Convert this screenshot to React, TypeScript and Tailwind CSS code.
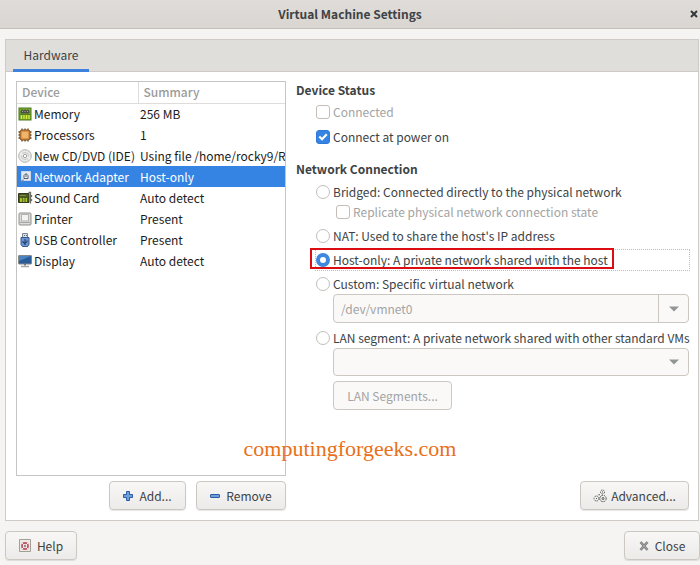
import { useState, type ReactNode } from 'react';

const ICON = 'h-4 w-4 shrink-0';

function MemoryIcon() {
  return (
    <svg viewBox="0 0 16 16" className={ICON}>
      <rect x="2" y="2" width="12" height="12" fill="#7fae2e" stroke="#47761a" />
      <path d="M3.500 7.500V5.500l1-2h1l1 1 1-1h1l1 1 1-1h1l1 2v2z" fill="#4a4f45" />
      <path d="M5 5.500h1M7.500 5.500h1M10 5.500h1" stroke="#a9ada4" />
      <path d="M4.500 9v4M7 9v4M9.500 9v4M12 9v4" stroke="#d9ec3c" strokeWidth="1.200" />
      <path d="M2.500 8.500h11" stroke="#4f7f18" />
    </svg>
  );
}

function ProcessorIcon() {
  return (
    <svg viewBox="0 0 16 16" className={ICON}>
      <path
        d="M5 1.500v13M8 1.500v13M11 1.500v13M1.500 5h13M1.500 8h13M1.500 11h13"
        stroke="#5d4a30"
        strokeWidth="1.300"
      />
      <rect x="3" y="3" width="10" height="10" rx="2" fill="#dc9244" stroke="#7c4c1a" />
      <rect x="5" y="5" width="6" height="6" rx="1" fill="#efb46e" />
    </svg>
  );
}

function DiscIcon() {
  return (
    <svg viewBox="0 0 16 16" className={ICON}>
      <circle cx="8" cy="8" r="6.300" fill="#e9e9e7" stroke="#b3b3b0" />
      <circle cx="8" cy="8" r="3.600" fill="none" stroke="#cbcbc8" />
      <circle cx="8" cy="8" r="1.700" fill="#fff" stroke="#a3a3a0" />
      <path d="M3 5.500l3 1.500M10 9l3 1.500" stroke="#fff" />
    </svg>
  );
}

function NetworkIcon() {
  return (
    <svg viewBox="0 0 16 16" className={ICON}>
      <path d="M4.500 2.500h9v9h-9z" fill="#e3e9f2" stroke="#cbd8ea" />
      <path d="M7 9.500V6.500l2-2 2 2v3z" fill="#f8fafc" stroke="#4c596b" />
      <path d="M9 5v3" stroke="#4c596b" />
      <path d="M3 13l3.500-3v3z" fill="#6f83a3" />
    </svg>
  );
}

function SoundIcon() {
  return (
    <svg viewBox="0 0 16 16" className={ICON}>
      <path d="M1.500 3.500h10.500v9h-10.500z" fill="#4b5b20" stroke="#33391f" />
      <path d="M3 5.500h6" stroke="#7e8b56" />
      <path d="M3 8h7v4H3z" fill="#a9c727" />
      <path d="M5 8l1 2-1 2M8 8v4" fill="none" stroke="#4b5b20" />
      <path d="M11.500 2.500h2v11M14.500 5v2M14.500 9v2" fill="none" stroke="#6b6d68" strokeWidth="1.300" />
    </svg>
  );
}

function PrinterIcon() {
  return (
    <svg viewBox="0 0 16 16" className={ICON}>
      <rect x="2" y="2" width="12" height="12" rx="1" fill="#dcdcda" stroke="#8f8f8c" />
      <rect x="4.500" y="3.500" width="7" height="6.500" fill="#f3f3f1" stroke="#b3b3b0" />
      <path d="M2.500 11.500h11" stroke="#a9a9a6" />
    </svg>
  );
}

function UsbIcon() {
  return (
    <svg viewBox="0 0 16 16" className={ICON}>
      <path d="M5.500 1.500h5v4h-5z" fill="#d9dee6" stroke="#7c8490" />
      <path d="M4 5.500h8v7l-1.500 2h-5L4 12.500z" fill="#6d98cf" stroke="#34578c" />
      <path d="M8 13V7M6 9v1.500l2 1M10 8.500V10l-2 1" fill="none" stroke="#17345f" />
      <path d="M7 3.500h.8M9 3.500h.8" stroke="#4b5563" />
    </svg>
  );
}

function DisplayIcon() {
  return (
    <svg viewBox="0 0 16 16" className={ICON}>
      <rect x="1.500" y="2.500" width="13" height="8.500" rx=".5" fill="#2a5c99" stroke="#85888a" />
      <path d="M2 3h12L2 8z" fill="#4b85c4" />
      <path d="M7 11h2v1.500H7z" fill="#777" />
      <path d="M4 13.500h8" stroke="#a3a5a2" strokeWidth="1.500" />
    </svg>
  );
}

const devices = [
  { name: 'Memory', summary: '256 MB', icon: MemoryIcon },
  { name: 'Processors', summary: '1', icon: ProcessorIcon },
  { name: 'New CD/DVD (IDE)', summary: 'Using file /home/rocky9/R', icon: DiscIcon },
  { name: 'Network Adapter', summary: 'Host-only', icon: NetworkIcon },
  { name: 'Sound Card', summary: 'Auto detect', icon: SoundIcon },
  { name: 'Printer', summary: 'Present', icon: PrinterIcon },
  { name: 'USB Controller', summary: 'Present', icon: UsbIcon },
  { name: 'Display', summary: 'Auto detect', icon: DisplayIcon },
];

function PushButton({ children, className = '' }: { children: ReactNode; className?: string }) {
  return (
    <button
      type="button"
      className={`flex h-[29px] items-center justify-center rounded border border-[#cdc7c2] bg-linear-to-b from-[#f8f7f6] to-[#edebe9] shadow-[0_1px_1px_rgba(0,0,0,0.1)] ${className}`}
    >
      {children}
    </button>
  );
}

function CheckRow({
  label,
  checked = false,
  disabled = false,
  className = '',
}: {
  label: string;
  checked?: boolean;
  disabled?: boolean;
  className?: string;
}) {
  const [on, setOn] = useState(checked);
  return (
    <label className={`flex items-center gap-[3px] ${disabled ? 'text-[#a3a4a3]' : ''} ${className}`}>
      <span className="relative flex">
        <input
          type="checkbox"
          checked={on}
          disabled={disabled}
          onChange={(e) => setOn(e.target.checked)}
          className="h-3.5 w-3.5 appearance-none rounded-[3px] border border-[#c3beb9] bg-white checked:border-[#2f7ad6] checked:bg-[#3584e4]"
        />
        {on && (
          <svg viewBox="0 0 14 14" className="pointer-events-none absolute inset-0 h-3.5 w-3.5">
            <path d="M3.300 6.500l2.700 2.700 4.800-5" fill="none" stroke="#fff" strokeWidth="2.200" />
          </svg>
        )}
      </span>
      {label}
    </label>
  );
}

function RadioRow({
  value,
  label,
  selected,
  onSelect,
}: {
  value: string;
  label: string;
  selected: string;
  onSelect: (v: string) => void;
}) {
  return (
    <label className="flex h-5 items-center gap-[3px] whitespace-nowrap">
      <input
        type="radio"
        name="connection"
        value={value}
        checked={selected === value}
        onChange={() => onSelect(value)}
        className="h-3.5 w-3.5 shrink-0 appearance-none rounded-full border border-[#c3beb9] bg-white checked:border-4 checked:border-[#3f88df]"
      />
      {label}
    </label>
  );
}

function Arrow() {
  return (
    <svg viewBox="0 0 10 6" className="h-1.5 w-2.5">
      <path d="M0 .5h10L5 5.500z" fill="#929595" />
    </svg>
  );
}

export default function App() {
  const [selected, setSelected] = useState('Network Adapter');
  const [connection, setConnection] = useState('host');

  return (
    <div className="relative flex min-h-screen flex-col bg-[#f5f4f2] font-['Noto_Sans_CJK_SC',sans-serif] text-[12px] leading-5 text-[#3d4345]">
      <header className="flex h-[29px] items-center border-b border-[#c4bfba] bg-linear-to-b from-[#e0dcd9] to-[#d9d5d1]">
        <span className="w-3" />
        <h1 className="flex-1 text-center font-bold">Virtual Machine Settings</h1>
        <button type="button" aria-label="Close window" className="flex w-3 items-center justify-center">
          <svg viewBox="0 0 8 8" className="h-2 w-2">
            <path d="M1 1l6 6M7 1L1 7" stroke="#33393b" strokeWidth="2" />
          </svg>
        </button>
      </header>

      <main className="mt-2.5 mr-px ml-[5px] flex flex-1 flex-col border border-[#cfcac5] bg-white">
        <div role="tablist" className="flex h-8 border-b border-[#cfcac5] bg-[#e0dedb] px-[7px]">
          <button
            type="button"
            role="tab"
            aria-selected="true"
            className="h-8 w-[76px] border-b-[3px] border-[#3c82dc] text-center"
          >
            Hardware
          </button>
        </div>

        <div className="flex flex-1 gap-2.5 pt-[9px] pr-[9px] pb-2.5 pl-2.5">
          <section className="flex w-[270px] shrink-0 flex-col gap-[5px]">
            <div className="flex-1 overflow-hidden border border-[#c6c5c3]">
              <table className="w-full table-fixed text-left text-[#1b1b1b]">
                <thead className="text-[#9a9c9a]">
                  <tr className="h-[21px] border-b border-[#dedddb]">
                    <th className="w-[121px] border-r border-[#dedddb] p-0 pl-[5px] font-medium">Device</th>
                    <th className="p-0 pl-[5px] font-medium">Summary</th>
                  </tr>
                </thead>
                <tbody>
                  {devices.map(({ name, summary, icon: Icon }) => (
                    <tr
                      key={name}
                      onClick={() => setSelected(name)}
                      className={`h-[21px] ${selected === name ? 'bg-[#3584e4] text-white' : ''}`}
                    >
                      <td className="p-0">
                        <div className="flex items-center gap-px whitespace-nowrap">
                          <Icon />
                          {name}
                        </div>
                      </td>
                      <td className="overflow-hidden p-0 pl-0.5 whitespace-nowrap">{summary}</td>
                    </tr>
                  ))}
                </tbody>
              </table>
            </div>
            <div className="flex justify-end gap-2.5">
              <PushButton className="w-[77px] gap-1.5">
                <svg viewBox="0 0 10 10" className="h-2.5 w-2.5">
                  <path
                    d="M3.500.5h3v3h3v3h-3v3h-3v-3h-3v-3h3z"
                    fill="#6f9fd8"
                    stroke="#2c5ba6"
                    strokeLinejoin="round"
                  />
                </svg>
                Add...
              </PushButton>
              <PushButton className="w-[90px] gap-1.5">
                <svg viewBox="0 0 10 10" className="h-2.5 w-2.5">
                  <rect x=".5" y="3.500" width="9" height="3" rx=".5" fill="#6f9fd8" stroke="#2c5ba6" />
                </svg>
                Remove
              </PushButton>
            </div>
          </section>

          <section className="flex min-w-0 flex-1 flex-col">
            <h2 className="h-[18px] leading-[18px] font-bold">Device Status</h2>
            <div className="pl-5">
              <CheckRow label="Connected" disabled className="h-[25px]" />
              <CheckRow label="Connect at power on" checked className="h-[25px]" />
            </div>

            <h2 className="mt-2.5 font-bold">Network Connection</h2>
            <div className="mt-[3px] flex flex-col pl-5">
              <RadioRow
                value="bridged"
                label="Bridged: Connected directly to the physical network"
                selected={connection}
                onSelect={setConnection}
              />
              <CheckRow label="Replicate physical network connection state" disabled className="h-5 pl-5" />
              <div className="mt-1">
                <RadioRow
                  value="nat"
                  label="NAT: Used to share the host's IP address"
                  selected={connection}
                  onSelect={setConnection}
                />
              </div>
              <div className="relative mt-1 outline-1 outline-[#bdbdbb] outline-dotted">
                <RadioRow
                  value="host"
                  label="Host-only: A private network shared with the host"
                  selected={connection}
                  onSelect={setConnection}
                />
                <div className="pointer-events-none absolute -top-0.5 -left-1.5 h-[21px] w-[304px] border-2 border-[#dc0d12]" />
              </div>
              <div className="mt-1">
                <RadioRow
                  value="custom"
                  label="Custom: Specific virtual network"
                  selected={connection}
                  onSelect={setConnection}
                />
              </div>
              <div className="ml-[17px] flex h-[29px] rounded border border-[#cdc7c2] bg-[#faf9f8]">
                <input
                  type="text"
                  aria-label="Virtual network"
                  value="/dev/vmnet0"
                  disabled
                  readOnly
                  className="min-w-0 flex-1 px-[7px] text-[#a3a4a3]"
                />
                <button
                  type="button"
                  disabled
                  aria-label="Choose virtual network"
                  className="flex w-[30px] items-center justify-center border-l border-[#cdc7c2]"
                >
                  <Arrow />
                </button>
              </div>
              <div className="mt-[5px]">
                <RadioRow
                  value="lan"
                  label="LAN segment: A private network shared with other standard VMs"
                  selected={connection}
                  onSelect={setConnection}
                />
              </div>
              <div className="relative ml-[17px]">
                <select
                  disabled
                  aria-label="LAN segment"
                  className="block h-7 w-full appearance-none rounded border border-[#cdc7c2] bg-[#faf9f8]"
                />
                <span className="pointer-events-none absolute inset-y-0 right-2.5 flex items-center">
                  <Arrow />
                </span>
              </div>
              <button
                type="button"
                disabled
                className="mt-[5px] ml-[17px] h-[29px] w-[119px] rounded border border-[#cdc7c2] bg-[#faf9f8] text-[#a3a4a3]"
              >
                LAN Segments...
              </button>
            </div>

            <PushButton className="mt-auto w-[109px] gap-1 self-end">
              <svg viewBox="0 0 14 14" className="h-3.5 w-3.5" fill="none" stroke="#555a5b">
                <circle cx="9.500" cy="3" r="2" strokeDasharray="1.500 .8" />
                <circle cx="3.500" cy="9.500" r="2.500" strokeDasharray="1.500 .8" />
                <circle cx="10" cy="9.500" r="3.200" strokeDasharray="1.800 .8" />
                <circle cx="10" cy="9.500" r="1" />
                <path d="M3.500 9v1M9.500 2.500v1M5.500 5.500l1.500.5" />
              </svg>
              Advanced...
            </PushButton>
          </section>
        </div>
      </main>

      <footer className="flex justify-between pt-2.5 pb-[5px] pl-[5px]">
        <PushButton className="w-[72px] gap-1.5">
          <svg viewBox="0 0 12 13" className="h-[13px] w-3">
            <path d="M.5.500h11v12H.5z" fill="#eceae5" stroke="#a39f96" />
            <circle cx="6" cy="7" r="3" fill="#f6eeee" stroke="#c25a6c" strokeWidth="1.800" />
            <path d="M3 4l2 2M9 4L7 6M3 10l2-2M9 10L7 8" stroke="#efe9e9" />
            <circle cx="6" cy="7" r="1" fill="#6e7076" />
          </svg>
          Help
        </PushButton>
        <PushButton className="w-[76px] gap-1.5">
          <svg viewBox="0 0 10 10" className="h-2.5 w-2.5">
            <path d="M1.500 1l7 8M8.500 1l-7 8" stroke="#767a7a" strokeWidth="2.600" />
            <path d="M1.500 1l7 8M8.500 1l-7 8" stroke="#a9acab" />
          </svg>
          Close
        </PushButton>
      </footer>

      <div className="pointer-events-none absolute inset-x-0 top-[436px] text-center font-['Liberation_Serif',serif] text-[22px] leading-[26px] text-[#e8701a]">
        computingforgeeks.com
      </div>
    </div>
  );
}
